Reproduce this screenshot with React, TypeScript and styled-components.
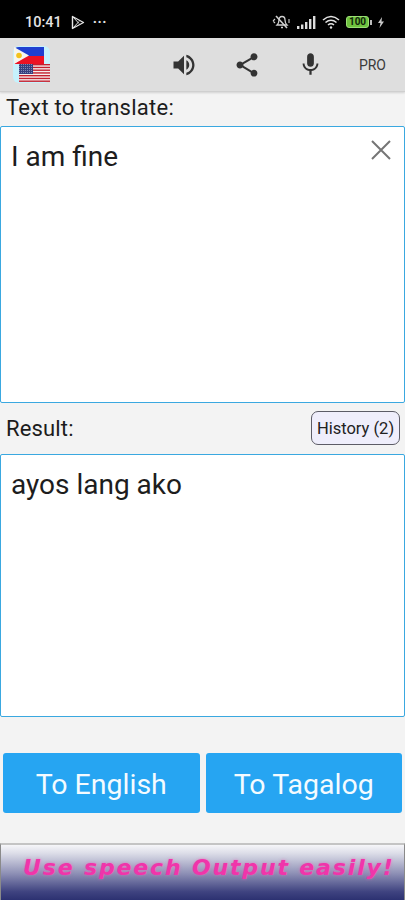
import React from "react";
import styled, { createGlobalStyle } from "styled-components";
import { MdMic, MdShare, MdVolumeUp } from "react-icons/md";

const Global = createGlobalStyle`
  html, body { margin: 0; padding: 0; background: #f3f3f3; }
  * { box-sizing: border-box; }
`;

const Screen = styled.div`
  width: 405px;
  height: 900px;
  display: flex;
  flex-direction: column;
  overflow: hidden;
  background: #f3f3f3;
  font-family: Roboto, "Liberation Sans", sans-serif;
  color: #1c1c1c;
`;

const StatusBar = styled.div`
  height: 38px;
  flex: none;
  background: #000;
  color: #e4e4e4;
  display: flex;
  align-items: center;
  padding: 6px 20px 0 25px;
`;

const Clock = styled.span`
  font-size: 14.5px;
  font-weight: 500;
  margin-right: 9px;
`;

const StatusDots = styled.span`
  font-size: 14px;
  font-weight: 700;
  letter-spacing: 0.5px;
  margin-left: 8px;
`;

const StatusRight = styled.div`
  margin-left: auto;
  display: flex;
  align-items: center;
  gap: 5px;
`;

const Toolbar = styled.div`
  height: 54px;
  flex: none;
  background: #dedede;
  border-bottom: 1px solid #cfcfcf;
  box-shadow: 0 1px 2px rgba(0, 0, 0, 0.14);
  display: flex;
  align-items: center;
  padding: 0 19px 0 13px;
`;

const ToolIcons = styled.div`
  margin-left: auto;
  display: flex;
  align-items: center;
  color: #333;
`;

const ToolSlot = styled.div`
  width: 63px;
  display: flex;
  justify-content: center;
  align-items: center;
`;

const Pro = styled.span`
  font-size: 14px;
  color: #3a3a3a;
  margin-left: 17px;
`;

const InputLabel = styled.div`
  height: 34px;
  flex: none;
  padding: 3px 0 0 6px;
  font-size: 22px;
  line-height: 26px;
  letter-spacing: 0.25px;
`;

const TextBox = styled.div<{ $h: number }>`
  height: ${(p) => p.$h}px;
  flex: none;
  position: relative;
  background: #fff;
  border: 1px solid #3aa8e0;
  border-radius: 2px;
  padding: 12px 11px 12px 10px;
  font-size: 28px;
  line-height: 36px;
  color: #1d1d1d;
`;

const Clear = styled.svg`
  position: absolute;
  top: 12px;
  right: 12px;
`;

const ResultRow = styled.div`
  height: 51px;
  flex: none;
  display: flex;
  align-items: center;
  justify-content: space-between;
  padding: 0 5px 0 6px;
  font-size: 22px;
  letter-spacing: 0.15px;
`;

const HistoryButton = styled.button`
  width: 89px;
  height: 34px;
  padding: 0;
  margin-top: -1px;
  background: #efeefb;
  border: 1px solid #5c5c66;
  border-radius: 7px;
  font: 400 16.5px Roboto, sans-serif;
  color: #222;
`;

const Actions = styled.div`
  flex: none;
  margin-top: 36px;
  padding: 0 3px;
  display: flex;
  gap: 6px;
`;

const ActionButton = styled.button`
  flex: 1;
  height: 60px;
  border: 0;
  border-radius: 3px;
  padding: 2px 0 0;
  background: #26a5f2;
  color: #f4fbff;
  font: 400 28.5px Roboto, sans-serif;
`;

const Banner = styled.div`
  margin-top: 30px;
  height: 57px;
  flex: none;
  border-top: 2px solid #c4c4c4;
  border-left: 1px solid #8a8a8a;
  border-right: 1px solid #8a8a8a;
  background: linear-gradient(to bottom, #f6f6f9 0%, #dcdde8 15%, #8d8fb5 52%, #3f4380 85%, #2c3171 100%);
  color: #f035aa;
  font: italic 700 22px "DejaVu Sans", sans-serif;
  letter-spacing: 1.85px;
  text-shadow: 0 0 3px rgba(245, 90, 185, 0.65);
  white-space: nowrap;
  padding: 10px 0 0 22px;
`;

const Flags = () => (
  <svg width="38" height="38" viewBox="0 0 38 38">
    <defs>
      <pattern id="stars" width="2" height="2" patternUnits="userSpaceOnUse">
        <rect width="2" height="2" fill="#36407f" />
        <rect width="0.8" height="0.8" fill="#aab0d0" />
      </pattern>
    </defs>
    <rect width="37" height="37" rx="6" fill="#c6f2fd" />
    <path d="M1 6 Q1 1 6 1 H31 V10 H13 Z" fill="#1f3fd0" />
    <path d="M1 18 H31 V10 H13 Z" fill="#ec1224" />
    <path d="M1 1 L16 9.5 L1 18 Z" fill="#f7f5ee" />
    <circle cx="6" cy="9.5" r="2.8" fill="#f3c31c" />
    <g transform="translate(6 18)">
      <rect width="31" height="18" fill="#f5eeee" />
      {[0, 1, 2, 3, 4, 5, 6].map((i) => (
        <rect key={i} y={i * 2.75} width="31" height="1.4" fill="#c2202f" />
      ))}
      <rect width="14" height="10" fill="url(#stars)" />
    </g>
  </svg>
);

const PlayOutline = () => (
  <svg width="14" height="15" viewBox="0 0 14 15" fill="none" stroke="#e6e6e6" strokeWidth="1.4" strokeLinejoin="round">
    <path d="M1.5 1.5 L12.5 7.5 L1.5 13.5 Z" />
    <path d="M1.5 1.5 L8 8.5 M1.5 13.5 L8 6.5" strokeWidth="1" />
  </svg>
);

const MutedBell = () => (
  <svg width="20" height="16" viewBox="0 0 20 16" fill="none" stroke="#cfcfcf" strokeWidth="1.3">
    <path d="M5 11 Q7 9 7 6 Q7 2.5 10 2.5 Q13 2.5 13 6 Q13 9 15 11 Z" />
    <path d="M9 13.5 H11" />
    <path d="M4 2 L15 14" strokeWidth="1.6" />
    <path d="M1 7 L3 5 M1 7 L3 9 M17 5 V9" strokeWidth="1.1" />
  </svg>
);

const Signal = () => (
  <svg width="20" height="13" viewBox="0 0 20 13" fill="#dcdcdc">
    <rect x="0" y="10" width="2.4" height="3" />
    <rect x="4" y="8.5" width="2.4" height="4.5" />
    <rect x="8" y="6" width="2.4" height="7" />
    <rect x="12" y="3" width="2.4" height="10" />
    <rect x="16" y="0" width="2.4" height="13" />
  </svg>
);

const Wifi = () => (
  <svg width="19" height="14" viewBox="0 0 19 14" fill="none" stroke="#e2e2e2" strokeWidth="1.6">
    <path d="M1 5 Q9 -2 17 5" />
    <path d="M3.5 7.5 Q9 3 14.5 7.5" />
    <path d="M6 10 Q9 7.5 12 10" />
    <circle cx="9" cy="12.5" r="1.2" fill="#e2e2e2" stroke="none" />
  </svg>
);

const BatteryCell = styled.span`
  width: 23px;
  height: 12px;
  border: 1px solid #9adf74;
  border-radius: 3px;
  background: #6fc23f;
  color: #10240a;
  font-size: 10px;
  font-weight: 700;
  line-height: 10px;
  text-align: center;
`;

const BatteryCap = styled.span`
  width: 2px;
  height: 5px;
  margin-left: -4px;
  background: #bbb;
`;

const Bolt = () => (
  <svg width="8" height="11" viewBox="0 0 8 11" fill="#c9c9c9">
    <path d="M5 0 L1 6 H3.5 L2.5 11 L7 4.5 H4.5 Z" />
  </svg>
);

export default function App() {
  return (
    <Screen>
      <Global />
      <StatusBar>
        <Clock>10:41</Clock>
        <PlayOutline />
        <StatusDots>···</StatusDots>
        <StatusRight>
          <MutedBell />
          <Signal />
          <Wifi />
          <BatteryCell>100</BatteryCell>
          <BatteryCap />
          <Bolt />
        </StatusRight>
      </StatusBar>
      <Toolbar>
        <Flags />
        <ToolIcons>
          <ToolSlot><MdVolumeUp size={28} /></ToolSlot>
          <ToolSlot><MdShare size={28} /></ToolSlot>
          <ToolSlot><MdMic size={27} /></ToolSlot>
          <Pro>PRO</Pro>
        </ToolIcons>
      </Toolbar>
      <InputLabel>Text to translate:</InputLabel>
      <TextBox $h={277}>
        I am fine
        <Clear width="22" height="22" viewBox="0 0 22 22" stroke="#757575" strokeWidth="2" fill="none">
          <path d="M2 2 L20 20 M20 2 L2 20" />
        </Clear>
      </TextBox>
      <ResultRow>
        <span>Result:</span>
        <HistoryButton>History (2)</HistoryButton>
      </ResultRow>
      <TextBox $h={263}>ayos lang ako</TextBox>
      <Actions>
        <ActionButton>To English</ActionButton>
        <ActionButton>To Tagalog</ActionButton>
      </Actions>
      <Banner>Use speech Output easily!</Banner>
    </Screen>
  );
}
